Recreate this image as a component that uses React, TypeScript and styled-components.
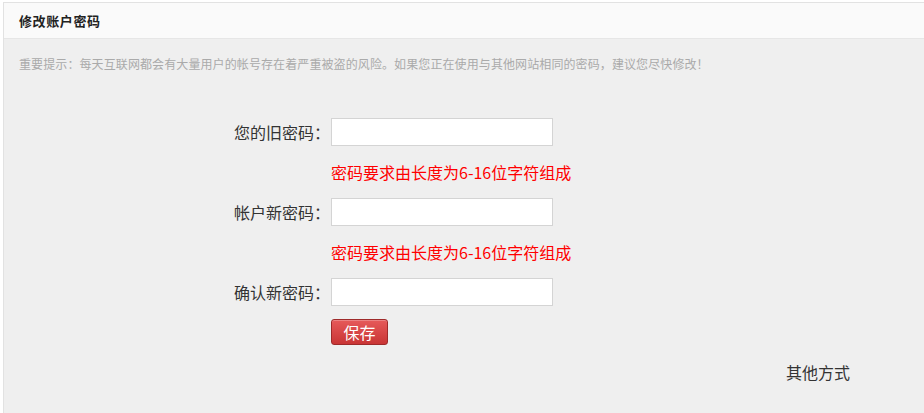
import React from "react";
import styled, { createGlobalStyle } from "styled-components";

const Global = createGlobalStyle`
  html, body { margin: 0; padding: 0; background: #ffffff; }
  body { font-family: "Microsoft YaHei", "Noto Sans CJK SC", "Noto Sans", sans-serif; }
  * { box-sizing: border-box; }
`;

const Panel = styled.div`
  margin: 2px 0 0 3px;
  border: 1px solid #e2e2e2;
  border-right: 0;
  border-bottom: 0;
  min-height: 411px;
  display: flex;
  flex-direction: column;
  background: #efefef;
`;

const Header = styled.div`
  height: 36px;
  background: #fafafa;
  border-bottom: 1px solid #e6e6e6;
  padding-left: 15px;
  display: flex;
  align-items: center;
`;

const Title = styled.h2`
  margin: 0;
  font-size: 13px;
  font-weight: bold;
  color: #222;
  letter-spacing: 0.6px;
`;

const Body = styled.div`
  padding: 15px 0 0 15px;
`;

const Tip = styled.p`
  margin: 0;
  font-size: 12px;
  line-height: 20px;
  color: #aaaaaa;
  letter-spacing: 0.1px;
`;

const Form = styled.div`
  display: grid;
  grid-template-columns: 312px 222px;
  margin-top: 44px;
  align-items: center;
`;

const Label = styled.label`
  text-align: right;
  font-size: 16px;
  color: #333;
  line-height: 28px;
  padding-right: 1px;
  white-space: nowrap;
`;

const Input = styled.input`
  width: 222px;
  height: 28px;
  border: 1px solid #d4d4d4;
  background: #fff;
  outline: none;
  padding: 0 6px;
  font-size: 14px;
`;

const Spacer = styled.div``;

const Hint = styled.div`
  font-size: 16px;
  line-height: 20px;
  color: #ff0000;
  margin: 16px 0;
  white-space: nowrap;
`;

const SaveButton = styled.button`
  margin-top: 13px;
  width: 57px;
  height: 26px;
  padding: 0;
  border: 1px solid #9e2a2a;
  border-radius: 3px;
  background: linear-gradient(#e65a5a, #c93535);
  color: #fff;
  font-size: 16px;
  font-family: inherit;
  line-height: 22px;
  cursor: pointer;
  box-shadow: inset 0 1px 0 rgba(255, 255, 255, 0.25);
`;

const Footer = styled.div`
  display: flex;
  justify-content: flex-end;
  padding-right: 74px;
  margin-top: 17px;
`;

const OtherLink = styled.a`
  font-size: 16px;
  line-height: 20px;
  color: #333;
  text-decoration: none;
`;

export default function App() {
  return (
    <>
      <Global />
      <Panel>
        <Header>
          <Title>修改账户密码</Title>
        </Header>
        <Body>
          <Tip>
            重要提示：每天互联网都会有大量用户的帐号存在着严重被盗的风险。如果您正在使用与其他网站相同的密码，建议您尽快修改！
          </Tip>
          <Form>
            <Label>您的旧密码：</Label>
            <Input type="password" />
            <Spacer />
            <Hint>密码要求由长度为6-16位字符组成</Hint>
            <Label>帐户新密码：</Label>
            <Input type="password" />
            <Spacer />
            <Hint>密码要求由长度为6-16位字符组成</Hint>
            <Label>确认新密码：</Label>
            <Input type="password" />
            <Spacer />
            <div>
              <SaveButton>保存</SaveButton>
            </div>
          </Form>
          <Footer>
            <OtherLink href="#">其他方式</OtherLink>
          </Footer>
        </Body>
      </Panel>
    </>
  );
}
